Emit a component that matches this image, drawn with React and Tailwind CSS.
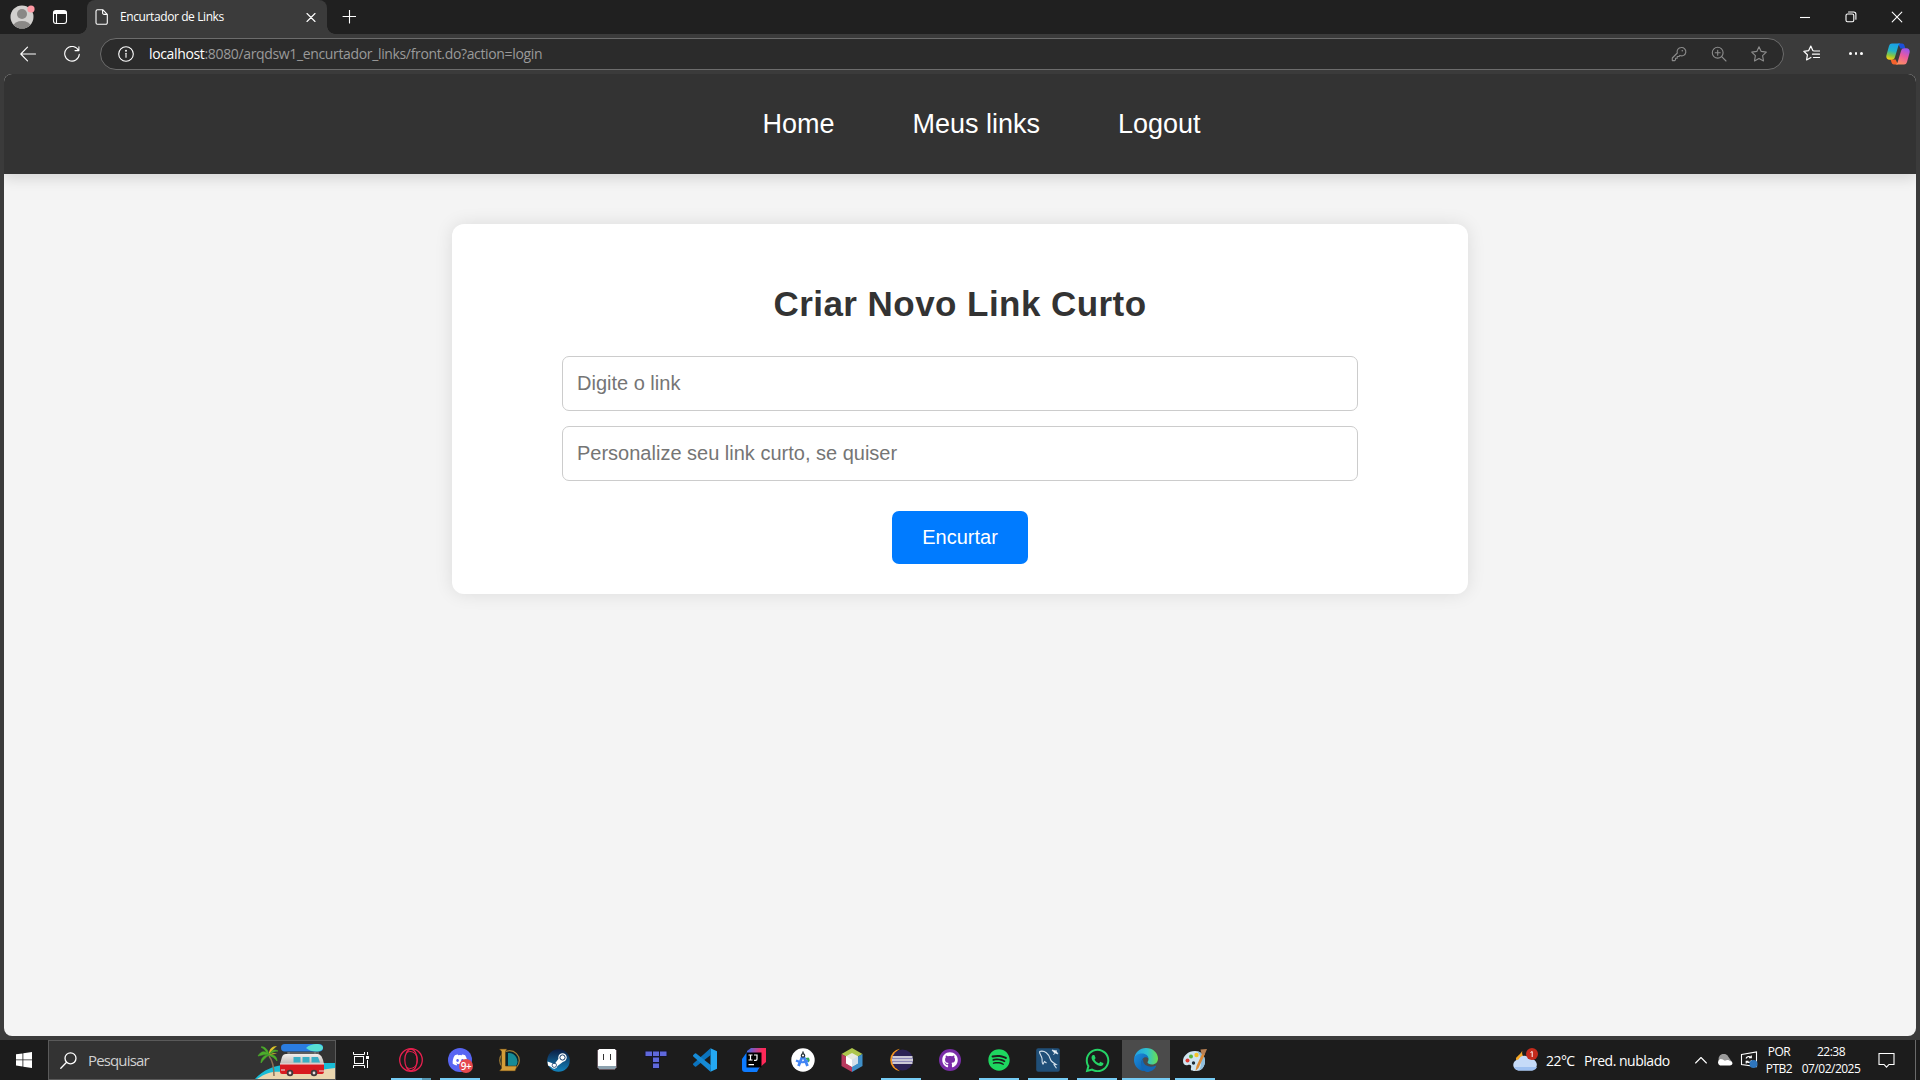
import React from "react";
import { FaDiscord, FaGithub, FaSpotify, FaWhatsapp, FaSteam } from "react-icons/fa";

const UI = "font-['Open_Sans','Noto_Sans',sans-serif]";

function Line({ size = 16, children, className = "", sw = 1.1 }) {
  return (
    <svg width={size} height={size} viewBox={`0 0 ${size} ${size}`} fill="none" stroke="currentColor" strokeWidth={sw} strokeLinecap="round" strokeLinejoin="round" className={`shrink-0 ${className}`}>
      {children}
    </svg>
  );
}

const STAR = "M8 .8 L10.200 5.400 L15.300 6.100 L11.600 9.700 L12.500 14.900 L8 12.500 L3.500 14.900 L4.400 9.700 L.7 6.100 L5.800 5.400 Z";

function TabStrip() {
  return (
    <div className="flex h-[34px] bg-[#202020] text-white">
      <div className="flex w-[87px] shrink-0 items-center pl-[10px]">
        <svg width="26" height="26" viewBox="0 0 26 26" className="shrink-0">
          <clipPath id="av"><circle cx="12" cy="13" r="11.5" /></clipPath>
          <circle cx="12" cy="13" r="11.5" fill="#d2d0ce" />
          <g clipPath="url(#av)" fill="#8a8886">
            <circle cx="12" cy="10" r="5" />
            <ellipse cx="12" cy="22" rx="8.5" ry="5" />
          </g>
          <circle cx="21" cy="5" r="3.6" fill="#ff99a4" />
        </svg>
        <Line size={16} className="ml-[16px]">
          <rect x="1.5" y="1.5" width="13" height="13" rx="2.5" />
          <path d="M2.200 2.600h11.600M1.800 3.600h12.400M1.800 4.400h12.400M4.500 5v9.5" />
        </Line>
      </div>
      <div className="relative flex w-[240px] shrink-0 items-center rounded-t-lg bg-[#3b3b3b] pl-[7px]">
        <span className="absolute -left-2 bottom-0 h-2 w-2 bg-[radial-gradient(circle_at_0_0,#202020_7.5px,#3b3b3b_8px)]" />
        <span className="absolute -right-2 bottom-0 h-2 w-2 bg-[radial-gradient(circle_at_100%_0,#202020_7.5px,#3b3b3b_8px)]" />
        <Line size={16}>
          <path d="M3.500 .7h5.200l4.600 4.600v8.500a1.500 1.500 0 0 1-1.500 1.500h-8.300a1.500 1.500 0 0 1-1.500-1.500v-11.600a1.500 1.500 0 0 1 1.500-1.500z M8.600 .9v3a1.500 1.500 0 0 0 1.500 1.500h3" />
        </Line>
        <span className="ml-[10px] w-[180px] whitespace-nowrap text-[12px] leading-4 tracking-[-0.4px]">Encurtador de Links</span>
        <Line size={10} className="ml-[6px]"><path d="M1 1.500l8 8M9 1.500l-8 8" /></Line>
      </div>
      <div className="flex w-[43px] items-center justify-center">
        <Line size={14}><path d="M7.500 0v13M1 6.500h13" /></Line>
      </div>
      <div className="ml-auto flex items-center">
        <div className="flex w-[46px] justify-center"><Line size={10}><path d="M0 5.500h10" strokeLinecap="butt" /></Line></div>
        <div className="flex w-[46px] justify-center">
          <Line size={12}><rect x="1" y="3" width="7.800" height="7.800" rx="1.500" /><path d="M3.500 1h5.200a2.200 2.200 0 0 1 2.200 2.200v5" /></Line>
        </div>
        <div className="flex w-[46px] justify-center"><Line size={12}><path d="M1.200 1.200l9.600 9.600M10.800 1.200l-9.600 9.600" /></Line></div>
      </div>
    </div>
  );
}

function Copilot() {
  return (
    <svg width="24" height="22" viewBox="0 0 24 22" className="shrink-0">
      <defs>
        <linearGradient id="cpa" x1="0.500" y1="0" x2="0.300" y2="1"><stop offset="0" stopColor="#19a0e8" /><stop offset=".45" stopColor="#23b4c8" /><stop offset=".75" stopColor="#8ac840" /><stop offset="1" stopColor="#ffce10" /></linearGradient>
        <linearGradient id="cpb" x1="0.700" y1="0" x2="0.300" y2="1"><stop offset="0" stopColor="#9a55f0" /><stop offset=".45" stopColor="#e85aa0" /><stop offset="1" stopColor="#ff9060" /></linearGradient>
      </defs>
      <path d="M12 .5h4c1.600 0 2.300 1.200 2.800 3l.6 2h-5z" fill="#1c50d8" />
      <path d="M12 21.500h-4c-1.600 0-2.300-1.200-2.800-3l-.6-2h5z" fill="#f4622c" />
      <path d="M6 .5h8.500c-1.500.3-2 1.700-2.500 3.500l-3 10c-.6 2-1.500 2.700-3.200 2.700H3.500C.8 16.700-.2 14.500.5 12L3 3C3.500 1.300 4.500.5 6 .5z" fill="url(#cpa)" />
      <path d="M18 21.500H9.500c1.500-.3 2-1.700 2.500-3.500l3-10c.6-2 1.500-2.700 3.200-2.700h2.300c2.700 0 3.700 2.200 3 4.700L21 19c-.5 1.700-1.500 2.500-3 2.500z" fill="url(#cpb)" />
    </svg>
  );
}

function Toolbar() {
  return (
    <div className={`flex h-[40px] items-center bg-[#3b3b3b] pb-px text-white ${UI}`}>
      <div className="flex w-[56px] shrink-0 justify-center"><Line size={16}><path d="M15.500 8H.8M7.500 1.200L.8 8l6.700 6.800" /></Line></div>
      <div className="flex w-[32px] shrink-0 justify-center"><Line size={16}><path d="M14.600 4.600A7.300 7.300 0 1 0 15.300 8.200M14.900 .8v3.800h-3.900" /></Line></div>
      <div className="ml-[12px] mt-px flex h-[32px] w-[1684px] shrink-0 items-center rounded-full border border-[#6c6c6c] bg-[#2b2b2b] pl-[17px]">
        <Line size={16}><circle cx="8" cy="8" r="7.300" /><path d="M8 7.300v4" /><circle cx="8" cy="4.800" r=".4" fill="currentColor" /></Line>
        <span className="ml-[15px] whitespace-nowrap text-[14px] leading-5 tracking-[-0.350px] text-[#9a9a9a]">
          <span className="text-white">localhost</span>:8080/arqdsw1_encurtador_links/front.do?action=login
        </span>
        <div className="ml-auto flex items-center text-[#8c8c8c]">
          <div className="flex w-[40px] justify-center"><Line size={16}><path d="M10.200 1.500a4.200 4.200 0 1 1-1.300 8l-1 1h-1.700v1.700H4.500v1.600l-.8.8H1.300v-2.600l5-5a4.200 4.200 0 0 1 3.900-5.500z" /><circle cx="11.300" cy="4.800" r=".8" fill="currentColor" stroke="none" /></Line></div>
          <div className="flex w-[40px] justify-center"><Line size={16}><circle cx="6.700" cy="6.700" r="5.400" /><path d="M10.700 10.700l4.300 4.300M4.200 6.700h5M6.700 4.200v5" /></Line></div>
          <div className="mr-[4px] flex w-[40px] justify-center"><Line size={16}><path d={STAR} /></Line></div>
        </div>
      </div>
      <div className="flex w-[56px] shrink-0 justify-center pr-px"><Line size={17} sw={1.200}><path d="M10.200 5.600h-.4L7.800 1 5.700 5.600 .8 6.300l3.600 3.500-.8 5.100 4.300-2.400M11 6h5.500M9.500 9.200h7M10.500 12.500h6" /></Line></div>
      <div className="flex w-[32px] shrink-0 justify-center gap-[3px]">
        <span className="h-[2.500px] w-[2.500px] rounded-full bg-white" />
        <span className="h-[2.500px] w-[2.500px] rounded-full bg-white" />
        <span className="h-[2.500px] w-[2.500px] rounded-full bg-white" />
      </div>
      <div className="ml-[14px]"><Copilot /></div>
    </div>
  );
}

function Page() {
  return (
    <div className="h-[966px] bg-[#3b3b3b] px-[4px] pb-[4px]">
      <main className="h-full overflow-hidden rounded-lg bg-[#f4f4f4] font-['Liberation_Sans',Arial,sans-serif]">
        <nav className="flex h-[100px] items-center justify-center gap-[78px] bg-[#333333] pl-[43px] text-[27px] leading-none text-white shadow-[0_5px_12.500px_rgba(0,0,0,0.12)]">
          <a>Home</a>
          <a>Meus links</a>
          <a>Logout</a>
        </nav>
        <section className="mx-auto mt-[50px] flex h-[370px] w-[1016px] flex-col items-center rounded-[12px] bg-white pt-[59px] shadow-[0_0_18px_rgba(0,0,0,0.1)]">
          <h1 className="text-[35px] font-bold leading-[42px] tracking-[0.450px] text-[#333333]">Criar Novo Link Curto</h1>
          <input placeholder="Digite o link" className="mt-[31px] h-[55px] w-[796px] rounded-[7px] border border-[#cccccc] px-[14px] text-[20px] placeholder:text-[#757575]" />
          <input placeholder="Personalize seu link curto, se quiser" className="mt-[15px] h-[55px] w-[796px] rounded-[7px] border border-[#cccccc] px-[14px] text-[20px] placeholder:text-[#757575]" />
          <button className="mt-[30px] h-[53px] w-[136px] rounded-[7px] bg-[#007bff] pb-[2px] text-[20px] text-white">Encurtar</button>
        </section>
      </main>
    </div>
  );
}

function BeachVan() {
  return (
    <svg width="80" height="36" viewBox="0 0 80 36" className="shrink-0">
      <defs><linearGradient id="roof" x1="0" y1="0" x2="0" y2="1"><stop offset="0" stopColor="#f2efec" /><stop offset="1" stopColor="#b9b4b0" /></linearGradient></defs>
      <path d="M0 36C8 27 20 22 30 22V20h50v16z" fill="#19bcd6" />
      <path d="M2 36C12 29 20 28 28 29c20 0 30-1 52-4v11z" fill="#ead6b0" />
      <path d="M19 33c0-9-1-15-5-20" stroke="#8a6f55" strokeWidth="1.500" fill="none" />
      <path d="M14 12C10 7 6 8 3 13c4-1 8-2 11-1zM14 12c-5 0-8 3-8 8 3-4 5-6 8-8zM14 12C13 6 9 3 6 4c4 2 5 5 8 8zM14 12c2-5 5-6 9-4-4 0-7 2-9 4zM14 12c4-1 8 1 8 6-3-4-5-4-8-6z" fill="#4cae2a" stroke="#4cae2a" strokeWidth=".6" />
      <path d="M14 11c0-5 3-8 8-8-2 2-5 4-8 8zM14 12c3-2 6-2 8-1-3 0-5 0-8 1z" fill="#d9c229" />
      <rect x="26" y="1" width="42" height="7.500" rx="3.750" fill="#2b7de0" />
      <path d="M51 5c3-3 7-4 10-4 5 0 7 2 7 3.700s-2 3.800-7 3.800c-4 0-7-1-10-3.500z" fill="#56e0d4" />
      <path d="M34 9v2.500M60 9v2.500M32 10h32" stroke="#8b8b8b" strokeWidth="1" />
      <path d="M25 21l2-7q1-3 4-3h32q4 0 6 10v1H25z" fill="url(#roof)" />
      <path d="M25 21h44v7q0 3-2 3H27q-2 0-2-2z" fill="#d81a20" />
      <path d="M25 21h44" stroke="#f4dcdc" strokeWidth="1" />
      <path d="M38.500 14h7v5.500h-7zM47.500 14h7v5.500h-7zM56.500 14h6.500l2 5.500h-8.500z" fill="#3aaec4" />
      <path d="M26 27h4M64 28h5" stroke="#e8e4e4" strokeWidth="1.200" />
      <g fill="#43393a"><circle cx="35" cy="30" r="3.300" /><circle cx="59" cy="30" r="3.300" /></g>
      <g fill="#e6e0e0"><circle cx="35" cy="30" r="1.400" /><circle cx="59" cy="30" r="1.400" /></g>
    </svg>
  );
}

const Opera = () => (
  <svg width="24" height="24" viewBox="0 0 24 24" fill="none" stroke="#e8204f">
    <circle cx="12" cy="12" r="11.300" strokeWidth="1.300" /><ellipse cx="12" cy="12" rx="6.200" ry="10.800" strokeWidth="1.200" /><path d="M8 4.500C10 2.500 18 3 18.200 12S10 21.500 8 19.500" strokeWidth="1" />
  </svg>
);
const Discord = () => (
  <div className="relative flex h-6 w-6 items-center justify-center rounded-full bg-[#5865f2] text-white">
    <FaDiscord size={16} />
    <span className="absolute -bottom-px -right-px flex h-[14px] w-[14px] items-center justify-center rounded-full bg-[#e5484d] pb-px text-[10px] font-semibold leading-none tracking-[-0.500px]">9+</span>
  </div>
);
const Lol = () => (
  <svg width="24" height="24" viewBox="0 0 24 24">
    <circle cx="12.500" cy="12.500" r="9.800" fill="#08252e" stroke="#a27c34" strokeWidth="1.200" />
    <path d="M11 5a8.500 8.500 0 0 1 8 13h-8z" fill="#168b96" />
    <path d="M2.500 1h7.500l-1.500 2.500V18H20l-1.800 5H2.500l2-2.700V3.500z" fill="#d39d38" stroke="#4e3714" strokeWidth=".6" />
  </svg>
);
const Steam = () => (
  <svg width="23" height="23" viewBox="0 0 23 23">
    <defs><linearGradient id="st" x1="0" y1="0" x2="0" y2="1"><stop offset="0" stopColor="#0c1c42" /><stop offset="1" stopColor="#1384bd" /></linearGradient></defs>
    <circle cx="11.500" cy="11.500" r="11.300" fill="url(#st)" />
    <path d="M.5 12.500l7 2.500 5-6.500 4 4-6 4.500a3.400 3.400 0 0 1-6.300 1L1 16.500z" fill="#fff" />
    <circle cx="15.500" cy="8.500" r="4.200" fill="#fff" /><circle cx="15.500" cy="8.500" r="2.600" fill="#fff" stroke="#123a68" strokeWidth="1" /><circle cx="7.300" cy="16.200" r="2.200" fill="none" stroke="#123a68" strokeWidth=".8" />
  </svg>
);
const Aseprite = () => (
  <svg width="24" height="24" viewBox="0 0 24 24" shapeRendering="crispEdges">
    <path d="M3 1h18v1h1v18h-1v1h-1v1H4v-1H3v-1H2V2h1z" fill="#65575f" /><path d="M4 1h16v1h1v16H3V2h1z" fill="#fff" /><path d="M3 18h18v2h-1v1H4v-1H3z" fill="#8ca1ae" /><path d="M8 6h1v6H8zM15 6h1v6h-1z" fill="#333" />
  </svg>
);
const Tetris = () => (
  <svg width="24" height="24" viewBox="0 0 24 24" fill="#5f68dc" stroke="#15152a" strokeWidth="1">
    <rect x="1" y="3" width="7.500" height="5.500" /><rect x="8.500" y="3" width="7" height="5.500" /><rect x="15.500" y="3" width="7.500" height="5.500" /><rect x="8.500" y="9" width="7" height="5.500" /><rect x="8.500" y="15" width="7" height="5.500" />
  </svg>
);
const Vscode = () => (
  <svg width="24" height="24" viewBox="0 0 24 24">
    <path d="M17.500 .3L24 3.300v17.400l-6.500 3z" fill="#24a8f2" /><path d="M17.500 .3L.3 15.500a1 1 0 0 0 0 1.400l1.600 1.500a1 1 0 0 0 1.300 0L18 6.800z" fill="#0b73bd" /><path d="M17.500 23.700L.3 8.500a1 1 0 0 1 0-1.400l1.600-1.500a1 1 0 0 1 1.300 0L18 17.200z" fill="#168bd6" />
  </svg>
);
const Intellij = () => (
  <svg width="24" height="24" viewBox="0 0 24 24">
    <defs><linearGradient id="ij" gradientUnits="userSpaceOnUse" x1="5" y1="3" x2="22" y2="9"><stop offset="0" stopColor="#3a6ee8" /><stop offset=".45" stopColor="#b0489c" /><stop offset=".8" stopColor="#fe2958" /></linearGradient></defs>
    <path d="M9 0h15v14L15 22H5V3z" fill="url(#ij)" /><path d="M0 11L5 4v12h14L15 24H3q-3 0-3-3z" fill="#0d7bff" /><rect x="4.500" y="4.500" width="15" height="15" fill="#000" />
    <path d="M6.500 7h4M8.500 7v5M6.500 12h4M12 7h3v4q0 1.300-1.300 1.300H12M6.500 16.700h5.500" stroke="#fff" strokeWidth="1.200" fill="none" />
  </svg>
);
const AndroidStudio = () => (
  <svg width="24" height="24" viewBox="0 0 24 24">
    <circle cx="12" cy="12" r="11.700" fill="#fff" /><path d="M14.500 10l3-.5a3 3 0 0 1-.5 5z" fill="#35a853" /><path d="M12 7L7.500 18M12 7l4.500 11" stroke="#4285f4" strokeWidth="2.800" fill="none" /><path d="M5 12.500q7 3.500 12 0" stroke="#4285f4" strokeWidth="2.200" fill="none" /><circle cx="12" cy="7.500" r="1.700" fill="#fff" stroke="#263238" strokeWidth="1.200" /><path d="M12 3.500v2.500" stroke="#263238" strokeWidth="1.500" />
  </svg>
);
const Netbeans = () => (
  <svg width="24" height="24" viewBox="0 0 24 24">
    <path d="M12 0l10.500 6L12 12 1.500 6z" fill="#adc54c" /><path d="M1.500 6L12 12v12L1.500 18z" fill="#b83a5e" /><path d="M22.500 6L12 12v12l10.500-6z" fill="#3f8fc8" /><path d="M12 5l6 3.300v7L12 18.700l-6-3.400v-7z" fill="#e8ebdf" /><path d="M6 8.300l6 3.400v7l-6-3.400z" fill="#fff" /><path d="M18 8.300l-6 3.400v7l6-3.400z" fill="#d4e0ea" />
  </svg>
);
const Eclipse = () => (
  <svg width="24" height="24" viewBox="0 0 24 24">
    <path d="M11 .8a11.300 11.300 0 0 0 0 22.400A13 13 0 0 1 11 .8z" fill="#f7941e" /><circle cx="13.500" cy="12" r="10.500" fill="#2c2255" /><path d="M3.500 9h20M3 12h21M3.500 15h20" stroke="#fff" strokeWidth="1.300" /><path d="M3 10.500h21M3 13.500h21" stroke="#8d87b8" strokeWidth="1" />
  </svg>
);
const Github = () => (
  <div className="flex h-[22px] w-[22px] items-center justify-center rounded-full bg-[#7a2da8] text-white"><FaGithub size={16} /></div>
);
const Spotify = () => (
  <div className="flex h-[22px] w-[22px] items-center justify-center text-[#1ed760]"><FaSpotify size={22} /></div>
);
const Workbench = () => (
  <svg width="24" height="24" viewBox="0 0 24 24">
    <rect x=".2" y=".2" width="23.600" height="23.600" rx="2" fill="#204f78" /><path d="M3.500 3.500c5-1.500 9.500 2 11 8 .5 2 3 3.500 5.500 5l-2 .2 2.500 3.500M3.500 3.500c0 3 2 4 2.500 7s-.5 4 1 5.500l1.500-2.500 2 1.500" fill="none" stroke="#d5e2ec" strokeWidth="1.100" /><path d="M16 2l2 2.500L22 6l-2-3zM17.500 7l3-5" fill="#fff" stroke="#dbe7f0" strokeWidth=".8" />
  </svg>
);
const Whatsapp = () => <FaWhatsapp size={27} color="#25d366" />;
const Edge = () => (
  <svg width="24" height="24" viewBox="0 0 24 24">
    <defs>
      <linearGradient id="e1" x1="0" y1=".5" x2="1" y2=".5"><stop offset="0" stopColor="#229fe4" /><stop offset=".55" stopColor="#2fc2cf" /><stop offset="1" stopColor="#6bdf4c" /></linearGradient>
      <linearGradient id="e2" x1="0" y1="0" x2="1" y2="1"><stop offset="0" stopColor="#1c8fe0" /><stop offset="1" stopColor="#0c59a4" /></linearGradient>
    </defs>
    <path d="M.2 10.500C1 4.500 5.700 0 12 0c7 0 12 5 12 10.500 0 3.700-2.500 6-6 6-2.700 0-4.500-1-4.500-2.200 0-.7 1-1.300 1-3C14.500 8.800 11.500 6.500 8 6.500c-4 0-7 2-7.800 4z" fill="url(#e1)" />
    <path d="M0 12c0-4 3.500-6.500 8-6.500 4 0 6.500 2.500 6.500 5.300-1.500-2-4.500-2-6 .2-2.500 4 0 9.500 4 12C5.500 24 0 18.500 0 12z" fill="url(#e2)" />
    <path d="M9.500 10.500c-3.500 3-3 9 .5 12 .7.600 2 1.500 3 1.500 4 0 7.500-2.500 9-5.500.3-.6-.2-1-.8-.7-5 2.200-11 .3-12-4.500-.2-1 0-2 .3-2.800z" fill="#1367b5" />
  </svg>
);
const Paint = () => (
  <svg width="24" height="24" viewBox="0 0 24 24">
    <path d="M12 3C5 3 0 8 0 13c0 4 3 5 5 4s4 0 3 3 2 3 5 3c6 0 9-5 9-10S18 3 12 3z" fill="#cfe4f1" /><path d="M14 3.300c5 .7 8 5 8 9.700 0 4-2 8-6 9.500 4-7 2-15-2-19.200z" fill="#8fbedd" />
    <circle cx="4.500" cy="12.500" r="2" fill="#df3b32" /><circle cx="8" cy="8.500" r="2" fill="#57b33c" /><circle cx="13.500" cy="7" r="2.200" fill="#f5c52c" /><circle cx="10.500" cy="15" r="1.700" fill="#202b36" />
    <path d="M12.500 23l1-5L19.500 5l2.500 1-6.500 14z" fill="#dc8a35" /><path d="M18.500 6l-1-4.500L24 1l-2.500 6z" fill="#b98052" />
  </svg>
);

const APPS = [
  [Opera, "open"], [Discord, "open"], [Lol, ""], [Steam, ""], [Aseprite, ""], [Tetris, ""], [Vscode, ""], [Intellij, ""], [AndroidStudio, ""], [Netbeans, ""],
  [Eclipse, "open"], [Github, ""], [Spotify, "open"], [Workbench, "open"], [Whatsapp, "open"], [Edge, "active"], [Paint, "open"],
];

function AppButton({ Icon, state, split }) {
  return (
    <div className={`relative flex h-[40px] w-[48px] shrink-0 items-center justify-center ${state === "active" ? "bg-[#4b4b4b]" : ""}`}>
      <Icon />
      {state === "open" && <span className="absolute bottom-0 left-[4px] h-[2px] w-[40px] bg-[#76ccf5]" />}
      {state === "active" && <span className="absolute bottom-0 left-0 h-[2px] w-full bg-[#76ccf5]" />}
      {split && <span className="absolute bottom-0 left-[35px] h-[2px] w-[9px] bg-[#5698b4]" />}
    </div>
  );
}

function Taskbar() {
  return (
    <div className={`flex h-[40px] items-center bg-[#1c1c1c] text-white ${UI}`}>
      <div className="flex w-[48px] shrink-0 justify-center">
        <svg width="16" height="16" viewBox="0 0 16 16" fill="#fff"><path d="M0 2.300l6.500-.9v6.100H0zM7.300 1.300L16 0v7.500H7.300zM0 8.300h6.500v6.200L0 13.600zM7.300 8.300H16V16l-8.700-1.300z" /></svg>
      </div>
      <div className="flex h-[40px] w-[288px] shrink-0 items-center border border-[#5a5a5a] bg-[#333333] pl-[11px]">
        <Line size={17} sw={1.300}><circle cx="10.500" cy="6.300" r="5.500" /><path d="M6.600 10.300L.8 16.200" /></Line>
        <span className="ml-[11px] text-[15px] leading-5 tracking-[-0.850px] text-[#d0d0d0]">Pesquisar</span>
        <div className="ml-auto flex self-end"><BeachVan /></div>
      </div>
      <div className="flex w-[48px] shrink-0 justify-center">
        <svg width="18" height="16" viewBox="0 0 18 16" fill="none" stroke="#fff" strokeWidth="1" className="ml-px"><rect x="2.500" y="4.500" width="9" height="7" /><path d="M1.500 0v2.500h11V0M1.500 16v-2.500h11V16M15.500 0v3M15.500 8v8" /><path d="M14 5.500h3" strokeWidth="3" /></svg>
      </div>
      <div className="ml-[3px] flex gap-px">
        {APPS.map(([Icon, state], i) => <AppButton key={i} Icon={Icon} state={state} split={i === 0} />)}
      </div>
      <div className="ml-auto flex h-full w-[407px] shrink-0 items-center">
        <svg width="25" height="24" viewBox="0 0 25 24" className="shrink-0">
          <path d="M10 1A8 8 0 0 0 14 12L4 13C0 9 8 8 10 1z" fill="#f5a623" />
          <path d="M6 22.500a5.500 5.500 0 0 1-.5-11A6.500 6.500 0 0 1 17 11a5.800 5.800 0 0 1 2 11.500z" fill="#c6dbf8" />
          <path d="M5 22.500A5 5 0 0 1 1 19h23a5 5 0 0 1-4 3.500z" fill="#9fc1f1" />
          <circle cx="19" cy="6" r="6" fill="#c42b1c" />
          <path d="M17.500 4.500l1.700-1V9" stroke="#fff" strokeWidth="1" fill="none" />
        </svg>
        <span className="ml-[8px] w-[38px] whitespace-nowrap text-[14px] tracking-[-0.550px]">22°C</span>
        <span className="w-[104px] whitespace-nowrap text-[14px] tracking-[-0.480px]">Pred. nublado</span>
        <Line size={12} className="ml-[7px]"><path d="M.6 9L6 3.500 11.400 9" /></Line>
        <svg width="17" height="12" viewBox="0 0 17 12" className="ml-[9px] shrink-0"><path d="M3 7a5 5 0 0 1 9.500-4L16 8z" fill="#9a9a9a" /><path d="M4 11.500a3.500 3.500 0 0 1 .5-6.500c2 0 3 1 4.500 1.700 1.500-1 4-.9 4.800.3 3.300 0 3.800 4.500 0 4.500z" fill="#fff" /></svg>
        <svg width="18" height="18" viewBox="0 0 18 18" fill="none" stroke="#fff" strokeWidth="1.100" className="ml-[7px] shrink-0"><path d="M1.500 3.500L16.500 1v14.500L1.500 13.500z" /><path d="M6 7.500a3 3 0 0 1 5-1M11.300 4.500v2.300H9M11.500 9a3 3 0 0 1-5 1.500M6.200 12.500v-2.200h2.300" /><circle cx="13.500" cy="13" r="4" fill="#2f76bd" stroke="none" /></svg>
        <div className="ml-[7px] flex w-[28px] flex-col items-center whitespace-nowrap text-[12px] leading-[17px] tracking-[-0.500px]"><span>POR</span><span>PTB2</span></div>
        <div className="ml-[8px] flex w-[60px] flex-col items-center whitespace-nowrap text-[12px] leading-[17px] tracking-[-0.500px]"><span>22:38</span><span>07/02/2025</span></div>
        <Line size={17} className="ml-[17px]"><path d="M1 1.500h15v11h-5l-2.500 2.700L6 12.500H1z" strokeLinejoin="miter" /></Line>
        <span className="ml-auto mr-[4px] h-[40px] w-px bg-[#6a6a6a]" />
      </div>
    </div>
  );
}

export default function App() {
  return (
    <div className={`flex h-[1080px] w-[1920px] flex-col overflow-hidden bg-[#3b3b3b] ${UI}`}>
      <TabStrip />
      <Toolbar />
      <Page />
      <Taskbar />
    </div>
  );
}
